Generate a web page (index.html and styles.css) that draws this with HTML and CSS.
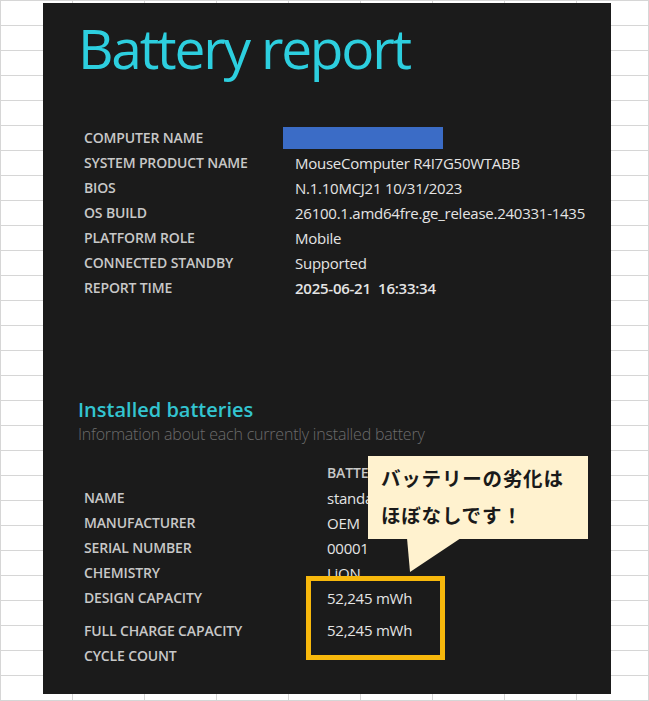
FILE: index.html
```html
<!DOCTYPE html>
<html lang="ja">
<head>
<meta charset="utf-8">
<title>Battery report</title>
<link rel="stylesheet" href="styles.css">
</head>
<body>
<div class="sheet">
  <main class="panel">
    <h1 class="title">Battery report</h1>
    <div class="info">
      <div class="label">COMPUTER NAME</div><div class="value"><span class="redact"></span></div>
      <div class="label">SYSTEM PRODUCT NAME</div><div class="value">MouseComputer R4I7G50WTABB</div>
      <div class="label">BIOS</div><div class="value">N.1.10MCJ21 10/31/2023</div>
      <div class="label">OS BUILD</div><div class="value">26100.1.amd64fre.ge_release.240331-1435</div>
      <div class="label">PLATFORM ROLE</div><div class="value">Mobile</div>
      <div class="label">CONNECTED STANDBY</div><div class="value">Supported</div>
      <div class="label">REPORT TIME</div><div class="value strong">2025-06-21&nbsp;&nbsp;16:33:34</div>
    </div>

    <section class="batteries">
      <h2 class="heading">Installed batteries</h2>
      <p class="sub">Information about each currently installed battery</p>
      <div class="binfo">
        <div class="label"></div><div class="label">BATTERY 1</div>
        <div class="label">NAME</div><div class="value">standard</div>
        <div class="label">MANUFACTURER</div><div class="value">OEM</div>
        <div class="label">SERIAL NUMBER</div><div class="value">00001</div>
        <div class="label">CHEMISTRY</div><div class="value">LiON</div>
        <div class="label">DESIGN CAPACITY</div><div class="value">52,245 mWh</div>
        <div class="label gap">FULL CHARGE CAPACITY</div><div class="value gap">52,245 mWh</div>
        <div class="label">CYCLE COUNT</div><div class="value"></div>
      </div>
    </section>

    <div class="highlight"></div>
    <div class="callout">
      <p class="callout-text">バッテリーの劣化は<br>ほぼなしです！</p>
      <svg class="tail" width="60" height="36" viewBox="0 0 60 36"><polygon points="0,0 3,34 54,0" fill="#fff2cf"/></svg>
    </div>
  </main>
</div>
</body>
</html>
```
FILE: styles.css
```css
html, body {
  margin: 0;
  padding: 0;
}
body {
  width: 649px;
  height: 701px;
  overflow: hidden;
  background-color: #ffffff;
  background-image:
    linear-gradient(to right, #d6d6d6 1px, transparent 1px),
    linear-gradient(to bottom, #d6d6d6 1px, transparent 1px);
  background-size: 72px 25px;
  font-family: "Open Sans", "Noto Sans", sans-serif;
}
.sheet {
  padding: 3px 0 0 43px;
}
.panel {
  position: relative;
  box-sizing: border-box;
  width: 568px;
  height: 691px;
  background: #1b1b1b;
  padding: 0 0 0 41px;
}
.title {
  margin: 0 0 0 -6px;
  padding-top: 10px;
  font-size: 55px;
  line-height: 70px;
  font-weight: 400;
  color: #2dcfdf;
  letter-spacing: -2.2px;
  height: 112px;
  box-sizing: border-box;
  height: 122px;
}
.info {
  display: grid;
  grid-template-columns: 211px auto;
  grid-auto-rows: 25px;
  align-items: center;
}
.label {
  font-size: 14px;
  font-weight: 600;
  color: #c8c8c8;
  letter-spacing: -0.15px;
  white-space: nowrap;
}
.value {
  font-size: 15px;
  font-weight: 400;
  color: #e4e4e4;
  letter-spacing: -0.25px;
  white-space: nowrap;
}
.value.strong {
  font-weight: 600;
}
.redact {
  display: block;
  width: 160px;
  height: 22px;
  margin: 0 0 0 -12px;
  background: #3b6cc6;
}
.batteries {
  margin-top: 97px;
}
.heading {
  margin: 0 0 0 -6px;
  font-size: 20px;
  font-weight: 600;
  color: #33c4d0;
  line-height: 26px;
}
.sub {
  margin: 0 0 0 -6px;
  font-size: 16px;
  font-weight: 300;
  color: #6c6c6c;
  line-height: 22px;
  letter-spacing: -0.2px;
}
.binfo {
  margin-top: 15px;
  display: grid;
  grid-template-columns: 243px auto;
  grid-template-rows: repeat(6, 25px) 33px 25px;
  align-items: center;
}
.binfo .gap {
  align-self: end;
  line-height: 25px;
}
.highlight {
  position: absolute;
  left: 263px;
  top: 573px;
  width: 139px;
  height: 84px;
  box-sizing: border-box;
  border: 5px solid #f7b80c;
}
.callout {
  position: absolute;
  left: 325px;
  top: 453px;
  width: 220px;
  height: 83px;
  box-sizing: border-box;
  background: #fff2cf;
  padding: 3px 0 0 13px;
}
.callout-text {
  margin: 0;
  font-family: "Noto Sans CJK JP", "Noto Sans", sans-serif;
  font-weight: 700;
  font-size: 19.5px;
  line-height: 37px;
  letter-spacing: 0.8px;
  color: #1a1a1a;
}
.tail {
  position: absolute;
  left: 39px;
  top: 82px;
  display: block;
}
```
